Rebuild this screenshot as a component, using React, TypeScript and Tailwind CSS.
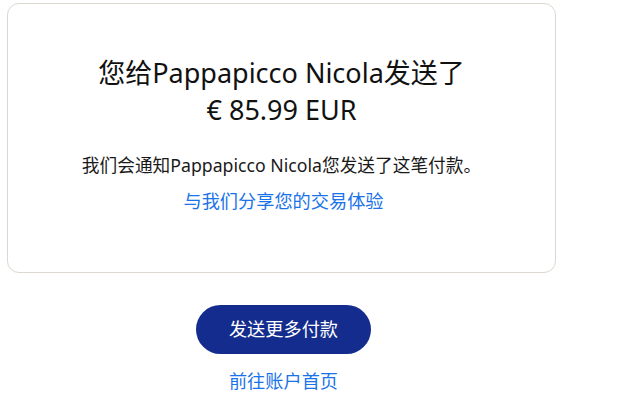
export default function App() {
  const font = { fontFamily: '"Noto Sans", "Noto Sans CJK SC", sans-serif' };
  return (
    <div className="w-[563px] pt-[3px] pl-[7px] bg-white" style={font}>
      <div className="w-[549px] h-[270px] border border-[#dcd8cf] rounded-[12px] bg-white flex flex-col items-center pt-[50px]">
        <h1 className="text-[27px] leading-[37px] text-[#111] text-center font-normal">
          您给Pappapicco Nicola发送了
          <br />€ 85.99 EUR
        </h1>
        <p className="mt-[24px] text-[17.7px] leading-[27px] text-[#1a1a1a] text-center">
          我们会通知Pappapicco Nicola您发送了这笔付款。
        </p>
        <a className="mt-[9px] text-[18.2px] leading-[27px] text-[#1a73e8] text-center cursor-pointer ml-[4px]">
          与我们分享您的交易体验
        </a>
      </div>
      <div className="w-[549px] flex flex-col items-center pt-[32px]">
        <button className="w-[175px] h-[49px] rounded-full bg-[#142c8e] text-white text-[18.2px] ml-[4px]">
          发送更多付款
        </button>
        <a className="mt-[14px] text-[18.2px] leading-[27px] text-[#1a73e8] cursor-pointer ml-[4px]">
          前往账户首页
        </a>
      </div>
    </div>
  );
}
